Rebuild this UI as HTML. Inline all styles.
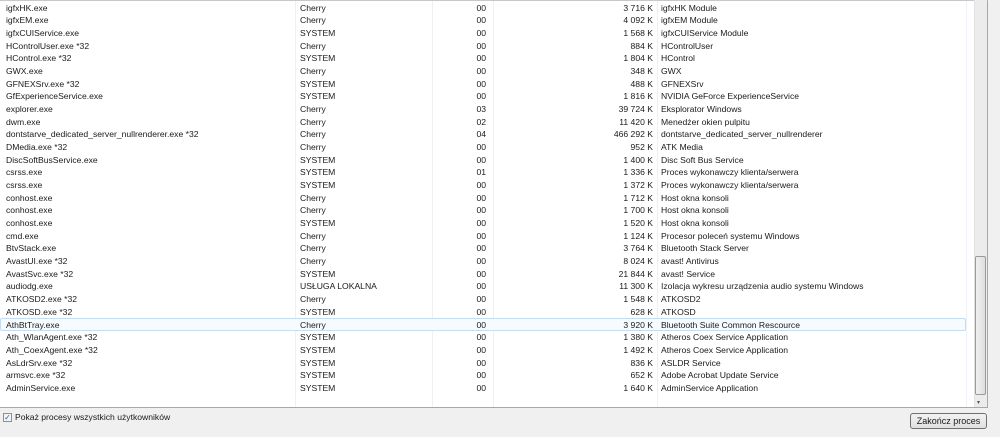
<!DOCTYPE html>
<html><head><meta charset="utf-8"><style>
*{margin:0;padding:0;box-sizing:border-box}
body{width:1000px;height:437px;background:#f0f0f0;font-family:"Liberation Sans",sans-serif;font-size:8.6px;color:#1a1a1a;position:relative;overflow:hidden}
#list{position:absolute;left:0;top:0;width:988px;height:408px;background:#fff;border:1px solid #a8a8a8;border-top:1px solid #c8c8c8;border-left:none;overflow:hidden}
.sep{position:absolute;top:0;height:407px;width:1px;background:#f0f0f0}
.row{position:absolute;left:0;width:966px;height:12.67px;line-height:12.67px;white-space:nowrap}
.row span{position:absolute;top:0}
.c1{left:6px}.c2{left:300px}.c3{left:440px;width:46px;text-align:right}.c4{left:500px;width:153px;text-align:right}.c5{left:661px}
.hl{background:#f6fbff;border:1px solid #c5dcf3;border-radius:2px}
#sb{position:absolute;left:974px;top:0;width:13px;height:407px;background:#ececec;border-left:1px solid #e2e2e2}
#thumb{position:absolute;left:975px;top:256px;width:11px;height:139px;background:linear-gradient(90deg,#f0f0f0,#dedede);border:1px solid #9a9a9a;border-radius:2px}
#btn{position:absolute;left:910px;top:413px;width:77px;height:16px;border:1px solid #707070;border-radius:3px;background:linear-gradient(#f2f2f2,#e0e0e0);text-align:center;line-height:14px;font-size:9px}
#cb{position:absolute;left:3px;top:413px;width:9px;height:9px;border:1px solid #8f8f8f;background:#f4f4f4;font-size:8px;line-height:7px;color:#2a5ca8;text-align:center}
#cbl{position:absolute;left:15px;top:412px;font-size:8.6px}
</style></head><body>
<div id="list">
<div class="sep" style="left:295px"></div>
<div class="sep" style="left:432px"></div>
<div class="sep" style="left:493px"></div>
<div class="sep" style="left:657px"></div>
<div class="sep" style="left:966px;background:#eef2f8"></div>
</div>
<div id="rows"></div>
<div id="sb"></div>
<div id="thumb"></div>
<div style="position:absolute;left:977px;top:399px;font-size:6px;color:#555">▾</div>
<div id="cb">✓</div>
<div id="cbl">Pokaż procesy wszystkich użytkowników</div>
<div id="btn">Zakończ proces</div>
<div style="position:absolute;left:0;top:0">
<div class="row" style="top:1.7px"><span class="c1">igfxHK.exe</span><span class="c2">Cherry</span><span class="c3">00</span><span class="c4">3 716 K</span><span class="c5">igfxHK Module</span></div>
<div class="row" style="top:14.4px"><span class="c1">igfxEM.exe</span><span class="c2">Cherry</span><span class="c3">00</span><span class="c4">4 092 K</span><span class="c5">igfxEM Module</span></div>
<div class="row" style="top:27.0px"><span class="c1">igfxCUIService.exe</span><span class="c2">SYSTEM</span><span class="c3">00</span><span class="c4">1 568 K</span><span class="c5">igfxCUIService Module</span></div>
<div class="row" style="top:39.7px"><span class="c1">HControlUser.exe *32</span><span class="c2">Cherry</span><span class="c3">00</span><span class="c4">884 K</span><span class="c5">HControlUser</span></div>
<div class="row" style="top:52.4px"><span class="c1">HControl.exe *32</span><span class="c2">SYSTEM</span><span class="c3">00</span><span class="c4">1 804 K</span><span class="c5">HControl</span></div>
<div class="row" style="top:65.0px"><span class="c1">GWX.exe</span><span class="c2">Cherry</span><span class="c3">00</span><span class="c4">348 K</span><span class="c5">GWX</span></div>
<div class="row" style="top:77.7px"><span class="c1">GFNEXSrv.exe *32</span><span class="c2">SYSTEM</span><span class="c3">00</span><span class="c4">488 K</span><span class="c5">GFNEXSrv</span></div>
<div class="row" style="top:90.4px"><span class="c1">GfExperienceService.exe</span><span class="c2">SYSTEM</span><span class="c3">00</span><span class="c4">1 816 K</span><span class="c5">NVIDIA GeForce ExperienceService</span></div>
<div class="row" style="top:103.1px"><span class="c1">explorer.exe</span><span class="c2">Cherry</span><span class="c3">03</span><span class="c4">39 724 K</span><span class="c5">Eksplorator Windows</span></div>
<div class="row" style="top:115.7px"><span class="c1">dwm.exe</span><span class="c2">Cherry</span><span class="c3">02</span><span class="c4">11 420 K</span><span class="c5">Menedżer okien pulpitu</span></div>
<div class="row" style="top:128.4px"><span class="c1">dontstarve_dedicated_server_nullrenderer.exe *32</span><span class="c2">Cherry</span><span class="c3">04</span><span class="c4">466 292 K</span><span class="c5">dontstarve_dedicated_server_nullrenderer</span></div>
<div class="row" style="top:141.1px"><span class="c1">DMedia.exe *32</span><span class="c2">Cherry</span><span class="c3">00</span><span class="c4">952 K</span><span class="c5">ATK Media</span></div>
<div class="row" style="top:153.7px"><span class="c1">DiscSoftBusService.exe</span><span class="c2">SYSTEM</span><span class="c3">00</span><span class="c4">1 400 K</span><span class="c5">Disc Soft Bus Service</span></div>
<div class="row" style="top:166.4px"><span class="c1">csrss.exe</span><span class="c2">SYSTEM</span><span class="c3">01</span><span class="c4">1 336 K</span><span class="c5">Proces wykonawczy klienta/serwera</span></div>
<div class="row" style="top:179.1px"><span class="c1">csrss.exe</span><span class="c2">SYSTEM</span><span class="c3">00</span><span class="c4">1 372 K</span><span class="c5">Proces wykonawczy klienta/serwera</span></div>
<div class="row" style="top:191.7px"><span class="c1">conhost.exe</span><span class="c2">Cherry</span><span class="c3">00</span><span class="c4">1 712 K</span><span class="c5">Host okna konsoli</span></div>
<div class="row" style="top:204.4px"><span class="c1">conhost.exe</span><span class="c2">Cherry</span><span class="c3">00</span><span class="c4">1 700 K</span><span class="c5">Host okna konsoli</span></div>
<div class="row" style="top:217.1px"><span class="c1">conhost.exe</span><span class="c2">SYSTEM</span><span class="c3">00</span><span class="c4">1 520 K</span><span class="c5">Host okna konsoli</span></div>
<div class="row" style="top:229.8px"><span class="c1">cmd.exe</span><span class="c2">Cherry</span><span class="c3">00</span><span class="c4">1 124 K</span><span class="c5">Procesor poleceń systemu Windows</span></div>
<div class="row" style="top:242.4px"><span class="c1">BtvStack.exe</span><span class="c2">Cherry</span><span class="c3">00</span><span class="c4">3 764 K</span><span class="c5">Bluetooth Stack Server</span></div>
<div class="row" style="top:255.1px"><span class="c1">AvastUI.exe *32</span><span class="c2">Cherry</span><span class="c3">00</span><span class="c4">8 024 K</span><span class="c5">avast! Antivirus</span></div>
<div class="row" style="top:267.8px"><span class="c1">AvastSvc.exe *32</span><span class="c2">SYSTEM</span><span class="c3">00</span><span class="c4">21 844 K</span><span class="c5">avast! Service</span></div>
<div class="row" style="top:280.4px"><span class="c1">audiodg.exe</span><span class="c2">USŁUGA LOKALNA</span><span class="c3">00</span><span class="c4">11 300 K</span><span class="c5">Izolacja wykresu urządzenia audio systemu Windows</span></div>
<div class="row" style="top:293.1px"><span class="c1">ATKOSD2.exe *32</span><span class="c2">Cherry</span><span class="c3">00</span><span class="c4">1 548 K</span><span class="c5">ATKOSD2</span></div>
<div class="row" style="top:305.8px"><span class="c1">ATKOSD.exe *32</span><span class="c2">SYSTEM</span><span class="c3">00</span><span class="c4">628 K</span><span class="c5">ATKOSD</span></div>
<div class="row hl" style="top:318.4px"><span class="c1" style="left:5px">AthBtTray.exe</span><span class="c2" style="left:299px">Cherry</span><span class="c3" style="left:439px">00</span><span class="c4" style="left:499px">3 920 K</span><span class="c5" style="left:660px">Bluetooth Suite Common Rescource</span></div>
<div class="row" style="top:331.1px"><span class="c1">Ath_WlanAgent.exe *32</span><span class="c2">SYSTEM</span><span class="c3">00</span><span class="c4">1 380 K</span><span class="c5">Atheros Coex Service Application</span></div>
<div class="row" style="top:343.8px"><span class="c1">Ath_CoexAgent.exe *32</span><span class="c2">SYSTEM</span><span class="c3">00</span><span class="c4">1 492 K</span><span class="c5">Atheros Coex Service Application</span></div>
<div class="row" style="top:356.5px"><span class="c1">AsLdrSrv.exe *32</span><span class="c2">SYSTEM</span><span class="c3">00</span><span class="c4">836 K</span><span class="c5">ASLDR Service</span></div>
<div class="row" style="top:369.1px"><span class="c1">armsvc.exe *32</span><span class="c2">SYSTEM</span><span class="c3">00</span><span class="c4">652 K</span><span class="c5">Adobe Acrobat Update Service</span></div>
<div class="row" style="top:381.8px"><span class="c1">AdminService.exe</span><span class="c2">SYSTEM</span><span class="c3">00</span><span class="c4">1 640 K</span><span class="c5">AdminService Application</span></div>
</div>
</body></html>
